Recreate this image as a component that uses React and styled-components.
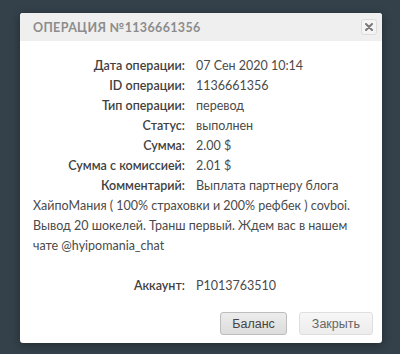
import styled, { createGlobalStyle } from "styled-components";

const Global = createGlobalStyle`
  html, body {
    margin: 0;
    padding: 0;
    background: #34414a;
    width: 400px;
    height: 354px;
    overflow: hidden;
  }
`;

const Dialog = styled.div`
  margin: 13px 0 0 20px;
  width: 362px;
  height: 330px;
  background: #fff;
  border-radius: 3px;
  box-shadow: 0 2px 8px rgba(0, 0, 0, 0.35);
  display: flex;
  flex-direction: column;
  overflow: hidden;
`;

const Header = styled.div`
  height: 28px;
  background: #efefef;
  display: flex;
  align-items: center;
  justify-content: space-between;
  padding: 0 5px 0 13px;
`;

const Title = styled.div`
  font-family: Lato, "Liberation Sans", sans-serif;
  font-weight: 700;
  font-size: 12.5px;
  letter-spacing: 0.35px;
  color: #8c8c8c;
`;

const Close = styled.button`
  width: 16px;
  height: 16px;
  padding: 0;
  border: 1px solid #dcdcdc;
  border-radius: 3px;
  background: #f4f4f4;
  display: flex;
  align-items: center;
  justify-content: center;
`;

const Body = styled.div`
  padding: 15px 13px 0;
  font-family: Lato, "Liberation Sans", sans-serif;
  font-size: 12.5px;
  line-height: 20px;
  color: #4a4a4a;
`;

const Row = styled.div`
  margin-top: ${(p) => (p.$gap ? "20px" : "0")};
`;

const Label = styled.span`
  display: inline-block;
  width: 152px;
  margin-right: 11px;
  text-align: right;
  font-weight: 600;
  color: #3f3f3f;
`;

const Footer = styled.div`
  margin-top: auto;
  display: flex;
  justify-content: flex-end;
  gap: 12px;
  padding: 0 9px 8px 0;
`;

const Button = styled.button`
  height: 23px;
  padding: 0 ${(p) => (p.$primary ? "11px" : "12px")};
  border-radius: 3px;
  border: 1px solid ${(p) => (p.$primary ? "#bdbdbd" : "#dedede")};
  background: ${(p) =>
    p.$primary
      ? "linear-gradient(#ececec, #dcdcdc)"
      : "linear-gradient(#f7f7f7, #ececec)"};
  font-family: "Liberation Sans", Arial, sans-serif;
  font-size: 12.5px;
  color: ${(p) => (p.$primary ? "#444" : "#666")};
`;

const rows = [
  ["Дата операции:", "07 Сен 2020 10:14"],
  ["ID операции:", "1136661356"],
  ["Тип операции:", "перевод"],
  ["Статус:", "выполнен"],
  ["Сумма:", "2.00 $"],
  ["Сумма с комиссией:", "2.01 $"],
  [
    "Комментарий:",
    "Выплата партнеру блога ХайпоМания ( 100% страховки и 200% рефбек ) covboi. Вывод 20 шокелей. Транш первый. Ждем вас в нашем чате @hyipomania_chat",
  ],
];

export default function App() {
  return (
    <>
      <Global />
      <Dialog>
        <Header>
          <Title>ОПЕРАЦИЯ №1136661356</Title>
          <Close>
            <svg width="8" height="8" viewBox="0 0 8 8">
              <path d="M1 1L7 7M7 1L1 7" stroke="#7a7a7a" strokeWidth="2" strokeLinecap="round" />
            </svg>
          </Close>
        </Header>
        <Body>
          {rows.map(([label, value]) => (
            <Row key={label}>
              <Label>{label}</Label>
              {value}
            </Row>
          ))}
          <Row $gap>
            <Label>Аккаунт:</Label>
            P1013763510
          </Row>
        </Body>
        <Footer>
          <Button $primary>Баланс</Button>
          <Button>Закрыть</Button>
        </Footer>
      </Dialog>
    </>
  );
}
